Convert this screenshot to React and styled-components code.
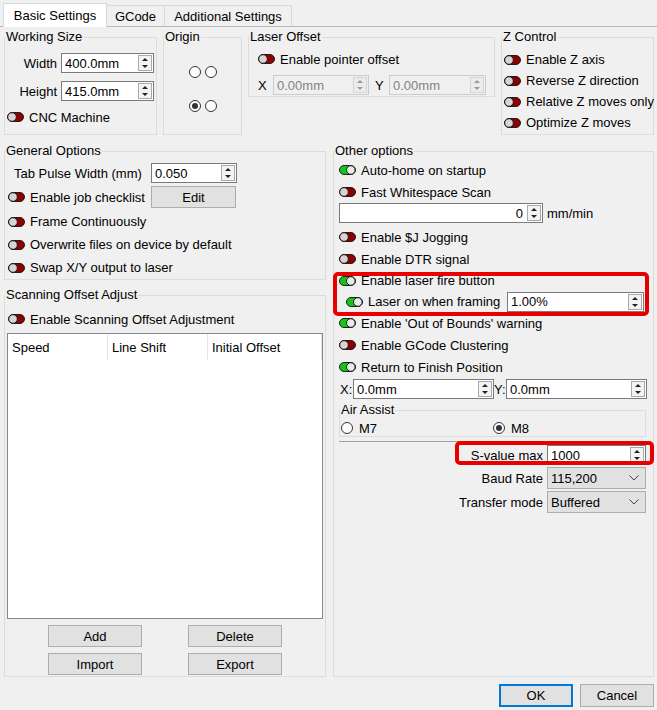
import React from 'react'
import styled, { createGlobalStyle } from 'styled-components'

const GlobalStyle = createGlobalStyle`
  * { box-sizing: border-box; }
  html, body { margin: 0; padding: 0; background: #f0f0f0; }
  body {
    font-family: 'Liberation Sans', Arial, sans-serif;
    font-size: 13px;
    color: #000;
  }
`

function Toggle({ on }) {
  return (
    <ToggleSvg width='17' height='10' viewBox='0 0 17 10'>
      <rect x='0.5' y='0.5' width='16' height='9' rx='4.5' fill={on ? '#17c417' : '#8e0000'} stroke='#1e1e1e' />
      <circle cx={on ? 11.8 : 5} cy='5' r='4.3' fill={on ? '#e6ece6' : '#dcd3d3'} stroke='#1e1e1e' />
    </ToggleSvg>
  )
}

function Spin({ value, width, align, disabled }) {
  return (
    <SpinBox $w={width} $disabled={disabled}>
      <SpinText $align={align} $disabled={disabled}>{value}</SpinText>
      <SpinArrows $disabled={disabled}>
        <Arrow $up $disabled={disabled} />
        <Arrow $disabled={disabled} />
      </SpinArrows>
    </SpinBox>
  )
}

function Combo({ value }) {
  return (
    <ComboBox>
      <span>{value}</span>
      <svg width='10' height='6' viewBox='0 0 10 6'>
        <polyline points='0.5,0.5 5,5 9.5,0.5' fill='none' stroke='#444' strokeWidth='1' />
      </svg>
    </ComboBox>
  )
}

function Option({ on, children, h, indent }) {
  return (
    <ToggleLine $h={h} $pl={indent}>
      <Toggle on={on} />
      <span>{children}</span>
    </ToggleLine>
  )
}

const App = () => {
  return (
    <Dialog>
      <GlobalStyle />
      <TabBar>
        <Tab $active $w={104}>Basic Settings</Tab>
        <Tab $w={59}>GCode</Tab>
        <Tab $w={128}>Additional Settings</Tab>
      </TabBar>

      <Pane>
        <TopRow>
          <Group>
            <Legend>Working Size</Legend>
            <SizeBody>
              <FieldLabel>Width</FieldLabel>
              <Spin value='400.0mm' width={93} />
              <FieldLabel>Height</FieldLabel>
              <Spin value='415.0mm' width={93} />
              <SizeToggle>
                <Option h={20} indent={2}>CNC Machine</Option>
              </SizeToggle>
            </SizeBody>
          </Group>

          <Group>
            <Legend>Origin</Legend>
            <OriginBody>
              <RadioPair>
                <Radio />
                <Radio />
              </RadioPair>
              <RadioPair>
                <Radio $checked />
                <Radio />
              </RadioPair>
            </OriginBody>
          </Group>

          <Group $top>
            <Legend>Laser Offset</Legend>
            <OffsetBody>
              <Option h={20}>Enable pointer offset</Option>
              <OffsetRow>
                <AxisLabel $w={15}>X</AxisLabel>
                <Spin value='0.00mm' width={96} disabled />
                <AxisLabel $w={20} $pl={6}>Y</AxisLabel>
                <Spin value='0.00mm' width={97} disabled />
              </OffsetRow>
            </OffsetBody>
          </Group>

          <Group>
            <Legend>Z Control</Legend>
            <ZBody>
              <Option h={21}>Enable Z axis</Option>
              <Option h={21}>Reverse Z direction</Option>
              <Option h={21}>Relative Z moves only</Option>
              <Option h={21}>Optimize Z moves</Option>
            </ZBody>
          </Group>
        </TopRow>

        <BottomArea>
          <LeftColumn>
            <Group>
              <Legend>General Options</Legend>
              <GeneralBody>
                <GeneralGrid>
                  <PulseLabel>Tab Pulse Width (mm)</PulseLabel>
                  <Spin value='0.050' width={86} />
                  <Option h={22} indent={3}>Enable job checklist</Option>
                  <Button $w={85} $h={22}>Edit</Button>
                </GeneralGrid>
                <GeneralRows>
                  <Option h={23} indent={3}>Frame Continuously</Option>
                  <Option h={23} indent={3}>Overwrite files on device by default</Option>
                  <Option h={23} indent={3}>Swap X/Y output to laser</Option>
                </GeneralRows>
              </GeneralBody>
            </Group>

            <ScanGroup>
              <Legend>Scanning Offset Adjust</Legend>
              <ScanBody>
                <Option h={20} indent={1}>Enable Scanning Offset Adjustment</Option>
                <Table>
                  <TableHead>
                    <HeadCell $w={100}>Speed</HeadCell>
                    <HeadCell $w={100}>Line Shift</HeadCell>
                    <HeadCell $w={114}>Initial Offset</HeadCell>
                  </TableHead>
                </Table>
                <ButtonGrid>
                  <Button $w={94} $h={22}>Add</Button>
                  <Button $w={94} $h={22}>Delete</Button>
                  <Button $w={94} $h={22}>Import</Button>
                  <Button $w={94} $h={22}>Export</Button>
                </ButtonGrid>
              </ScanBody>
            </ScanGroup>
          </LeftColumn>

          <Group>
            <Legend>Other options</Legend>
            <OtherBody>
              <Option on h={22}>Auto-home on startup</Option>
              <Option h={22}>Fast Whitespace Scan</Option>
              <SpeedRow>
                <Spin value='0' width={204} align='right' />
                <span>mm/min</span>
              </SpeedRow>
              <Option h={22}>Enable $J Jogging</Option>
              <Option h={22}>Enable DTR signal</Option>
              <Marked $t={2} $r={4} $b={-4} $l={-6}>
                <Option on h={21}>Enable laser fire button</Option>
                <FramingRow>
                  <Option on h={21} indent={7}>Laser on when framing</Option>
                  <Spin value='1.00%' width={137} />
                </FramingRow>
              </Marked>
              <Option on h={22}>Enable 'Out of Bounds' warning</Option>
              <Option h={22}>Enable GCode Clustering</Option>
              <Option on h={22}>Return to Finish Position</Option>
              <XYRow>
                <AxisLabel $w={13}>X:</AxisLabel>
                <Spin value='0.0mm' width={141} />
                <AxisLabel $w={12}>Y:</AxisLabel>
                <Spin value='0.0mm' width={141} />
              </XYRow>
              <AirGroup>
                <Legend>Air Assist</Legend>
                <AirBody>
                  <RadioLabel><Radio />M7</RadioLabel>
                  <RadioLabel><Radio $checked />M8</RadioLabel>
                </AirBody>
              </AirGroup>
              <Separator />
              <Marked $t={-4} $r={-1} $b={0} $l={116}>
                <FormRow $h={20} $mt={3}>
                  <FormLabel>S-value max</FormLabel>
                  <Spin value='1000' width={99} />
                </FormRow>
              </Marked>
              <FormRow $h={22} $mt={2}>
                <FormLabel>Baud Rate</FormLabel>
                <Combo value='115,200' />
              </FormRow>
              <FormRow $h={22} $mt={2}>
                <FormLabel>Transfer mode</FormLabel>
                <Combo value='Buffered' />
              </FormRow>
            </OtherBody>
          </Group>
        </BottomArea>
      </Pane>

      <Footer>
        <Button $w={74} $h={23} $primary>OK</Button>
        <Button $w={74} $h={23}>Cancel</Button>
      </Footer>
    </Dialog>
  )
}

export default App

const Dialog = styled.div`
  width: 657px;
  height: 710px;
  overflow: hidden;
  display: flex;
  flex-direction: column;
`

const TabBar = styled.div`
  display: flex;
  align-items: flex-end;
  height: 27px;
  padding-left: 3px;
  border-bottom: 1px solid #b9b9b9;
`

const Tab = styled.div`
  width: ${p => p.$w}px;
  height: ${p => (p.$active ? 24 : 21)}px;
  margin-bottom: ${p => (p.$active ? -1 : 0)}px;
  margin-right: -1px;
  display: flex;
  align-items: center;
  justify-content: center;
  background: ${p => (p.$active ? '#ffffff' : '#f0f0f0')};
  border: 1px solid #d9d9d9;
  border-bottom: none;
  white-space: nowrap;
  position: relative;
  z-index: ${p => (p.$active ? 1 : 0)};
`

const Pane = styled.div`
  padding: 3px 3px 0 4px;
`

const TopRow = styled.div`
  display: grid;
  grid-template-columns: 153px 79px 247px 153px;
  grid-template-rows: 105px;
  column-gap: 6px;
`

const Group = styled.fieldset`
  margin: 0;
  padding: 0;
  min-width: 0;
  border: 1px solid #dcdcdc;
  align-self: ${p => (p.$top ? 'start' : 'stretch')};
`

const Legend = styled.legend`
  margin: 0;
  padding: 0 1px;
  line-height: 14px;
`

const SizeBody = styled.div`
  display: grid;
  grid-template-columns: 52px 93px;
  column-gap: 4px;
  row-gap: 8px;
  align-items: center;
  padding-top: 9px;
`

const FieldLabel = styled.span`
  text-align: right;
`

const SizeToggle = styled.div`
  grid-column: 1 / -1;
  margin-top: -2px;
`

const OriginBody = styled.div`
  display: flex;
  flex-direction: column;
  align-items: center;
  gap: 22px;
  padding-top: 22px;
`

const RadioPair = styled.div`
  display: flex;
  gap: 4px;
`

const Radio = styled.span`
  width: 12px;
  height: 12px;
  flex: none;
  border-radius: 50%;
  border: 1px solid #333;
  background: #fff;
  display: flex;
  align-items: center;
  justify-content: center;
  &::after {
    content: '';
    width: 6px;
    height: 6px;
    border-radius: 50%;
    background: ${p => (p.$checked ? '#333' : 'transparent')};
  }
`

const OffsetBody = styled.div`
  padding: 5px 9px 1px;
`

const OffsetRow = styled.div`
  display: flex;
  align-items: center;
  margin-top: 6px;
`

const AxisLabel = styled.span`
  width: ${p => p.$w}px;
  padding-left: ${p => p.$pl || 0}px;
  flex: none;
`

const ZBody = styled.div`
  padding: 5px 0 0 2px;
`

const ToggleSvg = styled.svg`
  flex: none;
  display: block;
`

const ToggleLine = styled.div`
  display: flex;
  align-items: center;
  gap: 5px;
  height: ${p => p.$h || 22}px;
  padding-left: ${p => p.$pl || 0}px;
  white-space: nowrap;
`

const SpinBox = styled.div`
  width: ${p => p.$w}px;
  height: 20px;
  flex: none;
  display: flex;
  align-items: center;
  padding: 0 1px 0 3px;
  background: ${p => (p.$disabled ? '#f0f0f0' : '#ffffff')};
  border: 1px solid ${p => (p.$disabled ? '#cccccc' : '#7a7a7a')};
`

const SpinText = styled.span`
  flex: 1;
  text-align: ${p => p.$align || 'left'};
  padding-right: ${p => (p.$align === 'right' ? 4 : 0)}px;
  color: ${p => (p.$disabled ? '#838383' : '#000')};
  white-space: nowrap;
  overflow: hidden;
`

const SpinArrows = styled.span`
  width: 14px;
  height: 16px;
  flex: none;
  display: flex;
  flex-direction: column;
  border: 1px solid ${p => (p.$disabled ? '#d4d4d4' : '#a9a9a9')};
  background: ${p => (p.$disabled ? '#ececec' : '#f3f3f3')};
`

const Arrow = styled.span`
  flex: 1;
  display: flex;
  align-items: center;
  justify-content: center;
  &::before {
    content: '';
    border-left: 3px solid transparent;
    border-right: 3px solid transparent;
    ${p => (p.$up ? 'border-bottom' : 'border-top')}: 3px solid ${p => (p.$disabled ? '#9a9a9a' : '#222')};
  }
`

const BottomArea = styled.div`
  display: grid;
  grid-template-columns: 322px 321px;
  column-gap: 7px;
  margin-top: 9px;
`

const LeftColumn = styled.div`
  display: flex;
  flex-direction: column;
`

const GeneralBody = styled.div`
  padding-top: 5px;
`

const GeneralGrid = styled.div`
  display: grid;
  grid-template-columns: 146px 85px;
  row-gap: 3px;
  align-items: center;
`

const PulseLabel = styled.span`
  padding-left: 9px;
  white-space: nowrap;
`

const GeneralRows = styled.div`
  margin-top: 2px;
`

const Button = styled.div`
  width: ${p => p.$w}px;
  height: ${p => p.$h}px;
  display: flex;
  align-items: center;
  justify-content: center;
  background: #e1e1e1;
  border: ${p => (p.$primary ? '2px solid #0078d7' : '1px solid #adadad')};
`

const ScanGroup = styled(Group)`
  margin-top: 8px;
`

const ScanBody = styled.div`
  padding: 7px 2px 1px 2px;
`

const Table = styled.div`
  margin-top: 4px;
  height: 286px;
  background: #fff;
  border: 1px solid #828790;
`

const TableHead = styled.div`
  display: flex;
  height: 26px;
`

const HeadCell = styled.div`
  width: ${p => p.$w}px;
  display: flex;
  align-items: center;
  padding-left: 4px;
  border-right: 1px solid #e5e5e5;
`

const ButtonGrid = styled.div`
  display: grid;
  grid-template-columns: 94px 94px;
  justify-content: center;
  column-gap: 46px;
  row-gap: 6px;
  margin-top: 6px;
`

const OtherBody = styled.div`
  padding: 1px 0 0 5px;
`

const SpeedRow = styled.div`
  display: flex;
  align-items: center;
  gap: 4px;
  height: 20px;
  margin-bottom: 3px;
`

const Marked = styled.div`
  position: relative;
  &::after {
    content: '';
    position: absolute;
    top: ${p => p.$t}px;
    right: ${p => p.$r}px;
    bottom: ${p => p.$b}px;
    left: ${p => p.$l}px;
    border: 4px solid #e80000;
    border-radius: 5px;
    pointer-events: none;
  }
`

const FramingRow = styled.div`
  display: flex;
  align-items: center;
  justify-content: space-between;
  height: 21px;
  padding-right: 9px;
`

const XYRow = styled.div`
  display: flex;
  align-items: center;
  height: 20px;
  margin-top: 1px;
  padding-left: 1px;
`

const AirGroup = styled(Group)`
  margin: 4px 7px 0 0;
`

const AirBody = styled.div`
  display: grid;
  grid-template-columns: 1fr 1fr;
  padding: 4px 0 1px 1px;
`

const RadioLabel = styled.label`
  display: flex;
  align-items: center;
  gap: 6px;
  height: 14px;
`

const Separator = styled.div`
  margin: 4px 7px 0 0;
  height: 1px;
  background: #a0a0a0;
`

const FormRow = styled.div`
  display: flex;
  align-items: center;
  gap: 4px;
  height: ${p => p.$h}px;
  margin-top: ${p => p.$mt}px;
  padding-right: 7px;
`

const FormLabel = styled.span`
  flex: 1;
  text-align: right;
  white-space: nowrap;
`

const ComboBox = styled.div`
  width: 99px;
  height: 22px;
  flex: none;
  display: flex;
  align-items: center;
  justify-content: space-between;
  padding: 0 6px 0 3px;
  background: #e1e1e1;
  border: 1px solid #adadad;
`

const Footer = styled.div`
  display: flex;
  justify-content: flex-end;
  gap: 7px;
  padding: 7px 3px 0 0;
`
